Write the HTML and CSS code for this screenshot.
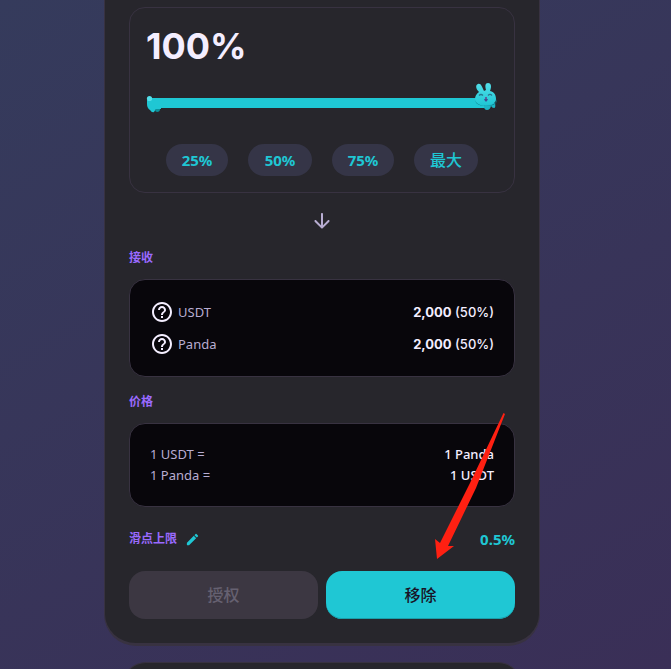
FILE: index.html
```html
<!DOCTYPE html>
<html lang="zh-CN">
<head>
<meta charset="utf-8">
<meta name="viewport" content="width=device-width, initial-scale=1">
<title>移除流动性</title>
<link rel="stylesheet" href="styles.css">
</head>
<body>
<main class="page">
  <div class="stack">
  <section class="card">
    <div class="amount-box">
      <label class="amount" for="amount">100%</label>
      <div class="slider">
        <input class="range" id="amount" type="range" min="0" max="100" value="100">
        <svg class="tail" viewBox="0 0 16 18" aria-hidden="true">
          <path d="M8 8h6v5q0 3-3 3l-2-2z" fill="#0b929c"/>
          <path d="M1 5h14v9H10L8 17Q6 18 4 15Q1 13 1 9z" fill="#1fc7d4"/>
          <path d="M10 14h4q0 3-3 3l-2-1z" fill="#0b929c"/>
          <circle cx="3.500" cy="3.500" r="2.600" fill="#53dee9"/>
        </svg>
        <svg class="bunny" viewBox="0 0 24 30" aria-hidden="true">
          <defs><linearGradient id="fur" x1="0" y1="0" x2="0" y2="1"><stop offset="0" stop-color="#53dee9"/><stop offset="1" stop-color="#1fc7d4"/></linearGradient></defs>
          <path d="M10 21h11q1 5-1 5-2 0-3-2-1 4-4 4-3 0-3-4z" fill="#1cb5c4"/>
          <path d="M1 17q1 7 11 7t11-7v2q-1 5-11 5T1 18z" fill="#0b6d79"/>
          <path d="M5 10C2 7 1 3 4 2c3-1 4 3 6 7l2-1c-1-4-1-7 2-7s4 3 2 8c5 1 6 5 6 8 0 4-4 6-10 6S1 21 1 17q0-4 4-7z" fill="url(#fur)"/>
          <path d="M5 13.500q2-2 4 0M14 13.500q2-2 4 0" fill="none" stroke="#28768f" stroke-width="1.200"/>
          <path d="M10 17h4l-1 2q-1 1-2 0z" fill="#3f4d91"/>
          <circle cx="12" cy="16" r="1" fill="#6d3c8b"/>
        </svg>
      </div>
      <div class="presets">
        <button class="preset" type="button">25%</button>
        <button class="preset preset-wide" type="button">50%</button>
        <button class="preset" type="button">75%</button>
        <button class="preset preset-wide preset-max" type="button">最大</button>
      </div>
    </div>

    <svg class="down" viewBox="0 0 24 24" aria-hidden="true"><path d="M11 5V16.170L6.120 11.290C5.730 10.900 5.090 10.900 4.700 11.290C4.310 11.680 4.310 12.310 4.700 12.700L11.290 19.290C11.680 19.680 12.310 19.680 12.700 19.290L19.290 12.700C19.680 12.310 19.680 11.680 19.290 11.290C18.900 10.900 18.270 10.900 17.880 11.290L13 16.170V5C13 4.450 12.550 4 12 4S11 4.450 11 5Z"/></svg>

    <h2 class="label">接收</h2>
    <div class="panel tokens">
      <div class="row">
        <span class="token"><svg class="help" viewBox="0 0 24 24" aria-hidden="true"><path d="M11 18h2v-2h-2v2zm1-16C6.480 2 2 6.480 2 12s4.480 10 10 10 10-4.480 10-10S17.520 2 12 2zm0 18c-4.410 0-8-3.590-8-8s3.590-8 8-8 8 3.590 8 8-3.590 8-8 8zm0-14c-2.210 0-4 1.790-4 4h2c0-1.100.900-2 2-2s2 .900 2 2c0 2-3 1.750-3 5h2c0-2.250 3-2.500 3-5 0-2.210-1.790-4-4-4z"/></svg>USDT</span>
        <span class="value figures"><b>2,000</b> (50%)</span>
      </div>
      <div class="row">
        <span class="token"><svg class="help" viewBox="0 0 24 24" aria-hidden="true"><path d="M11 18h2v-2h-2v2zm1-16C6.480 2 2 6.480 2 12s4.480 10 10 10 10-4.480 10-10S17.520 2 12 2zm0 18c-4.410 0-8-3.590-8-8s3.590-8 8-8 8 3.590 8 8-3.590 8-8 8zm0-14c-2.210 0-4 1.790-4 4h2c0-1.100.900-2 2-2s2 .900 2 2c0 2-3 1.750-3 5h2c0-2.250 3-2.500 3-5 0-2.210-1.790-4-4-4z"/></svg>Panda</span>
        <span class="value figures"><b>2,000</b> (50%)</span>
      </div>
    </div>

    <h2 class="label">价格</h2>
    <div class="panel">
      <div class="row"><span>1 USDT =</span><span class="value">1 Panda</span></div>
      <div class="row"><span>1 Panda =</span><span class="value">1 USDT</span></div>
    </div>

    <div class="slippage">
      <h2 class="label">滑点上限</h2>
      <button class="edit" type="button" aria-label="编辑">
        <svg class="pencil" viewBox="0 0 24 24" aria-hidden="true"><path d="M3 17.460v3.040c0 .280.220.500.500.500h3.040c.130 0 .260-.050.350-.150L17.810 9.940l-3.750-3.750L3.150 17.100c-.100.100-.150.220-.150.360zM20.710 7.040a1 1 0 0 0 0-1.410l-2.340-2.340a1 1 0 0 0-1.410 0l-1.830 1.830 3.750 3.750 1.830-1.830z"/></svg>
      </button>
      <span class="percent">0.5%</span>
    </div>

    <div class="actions">
      <button class="action" type="button" disabled>授权</button>
      <button class="action action-primary" type="button">移除</button>
    </div>
    <svg class="pointer" viewBox="0 0 72 148" aria-hidden="true"><path d="M69.500 0 71 1 42 75 14 133 20 133 3 146 1 126 6 130 36 70z" fill="#ff2012"/></svg>
  </section>
  <section class="card card-next"></section>
  </div>
</main>
</body>
</html>
```
FILE: styles.css
```css
* {
  box-sizing: border-box;
}

body {
  margin: 0;
  min-height: 100vh;
  overflow: hidden;
  background: linear-gradient(150deg, #353b5c 0%, #3a2f57 100%);
  color: #f4eeff;
  font-family: "Noto Sans", "Noto Sans CJK SC", sans-serif;
  font-size: 13px;
  line-height: 21px;
}

button {
  margin: 0;
  padding: 0;
  border: 0;
  font: inherit;
}

.page {
  height: 100vh;
  overflow: hidden;
  padding-right: 27px;
}

.stack {
  display: flex;
  flex-direction: column;
  align-items: center;
  gap: 16px;
}

.card {
  position: relative;
  width: 100%;
  max-width: 436px;
  padding: 7px 24px 24px;
  background: #27262c;
  border: solid #383241;
  border-width: 0 1px 3px;
  border-radius: 0 0 32px 32px;
}

.card-next {
  max-width: 400px;
  min-height: 80px;
  border-width: 1px 1px 3px;
  border-radius: 24px;
}

.amount-box {
  padding: 16px;
  border: 1px solid #383241;
  border-radius: 16px;
}

.amount {
  display: block;
  font-family: Inter, sans-serif;
  font-size: 36px;
  font-weight: 700;
  line-height: 44px;
}

.slider {
  position: relative;
  display: flex;
  align-items: center;
  height: 70px;
  margin-bottom: 6px;
}

.range {
  appearance: none;
  width: 100%;
  height: 32px;
  margin: 0 8px 0 4px;
  background: linear-gradient(#1fc7d4, #1fc7d4) center / 100% 10px no-repeat;
  cursor: pointer;
}

.range::-webkit-slider-thumb {
  appearance: none;
  width: 24px;
  height: 32px;
  background: transparent;
}

.tail,
.bunny {
  position: absolute;
  pointer-events: none;
}

.tail {
  left: 0;
  top: 27px;
  width: 16px;
  height: 18px;
}

.bunny {
  right: 0;
  top: 14px;
  width: 24px;
  height: 30px;
}

.presets {
  display: flex;
  justify-content: space-evenly;
}

.preset {
  width: 62px;
  height: 32px;
  border-radius: 16px;
  background: #353547;
  color: #1fc7d4;
  font-size: 15px;
  font-weight: 700;
}

.preset-wide {
  width: 64px;
}

.preset-max {
  font-size: 16px;
  font-weight: 500;
}

.down {
  display: block;
  width: 24px;
  height: 24px;
  margin: 16px auto;
  fill: #b8add2;
}

.label {
  margin: 0 0 12px;
  color: #9a6aff;
  font-size: 12px;
  font-weight: 700;
  line-height: 18px;
}

.panel {
  margin-bottom: 16px;
  padding: 20px;
  border: 1px solid #383241;
  border-radius: 16px;
  background: #08060b;
  color: #b8add2;
}

.tokens {
  display: grid;
  gap: 8px;
}

.row {
  display: flex;
  align-items: center;
  justify-content: space-between;
}

.token {
  display: flex;
  align-items: center;
  gap: 4px;
}

.help {
  width: 24px;
  height: 24px;
  fill: #f4eeff;
}

.value {
  color: #f4eeff;
  font-weight: 500;
}

.figures {
  font-family: Inter, sans-serif;
}

.slippage {
  display: flex;
  align-items: center;
  height: 24px;
  margin: 20px 0;
}

.slippage .label {
  margin: 0;
}

.edit {
  display: flex;
  margin-left: 8px;
  background: none;
}

.pencil {
  width: 15px;
  height: 15px;
  fill: #1fc7d4;
}

.percent {
  margin-left: auto;
  color: #1fc7d4;
  font-size: 15px;
  font-weight: 700;
}

.actions {
  display: grid;
  grid-template-columns: 1fr 1fr;
  gap: 8px;
}

.action {
  height: 48px;
  border-radius: 16px;
  background: #3c3742;
  color: #666171;
  font-size: 16px;
  font-weight: 500;
}

.action-primary {
  background: #1fc7d4;
  box-shadow: inset 0 -1px #199faa;
  color: #191326;
}

.pointer {
  position: absolute;
  right: 33px;
  bottom: 82px;
  width: 72px;
  height: 148px;
}
```
